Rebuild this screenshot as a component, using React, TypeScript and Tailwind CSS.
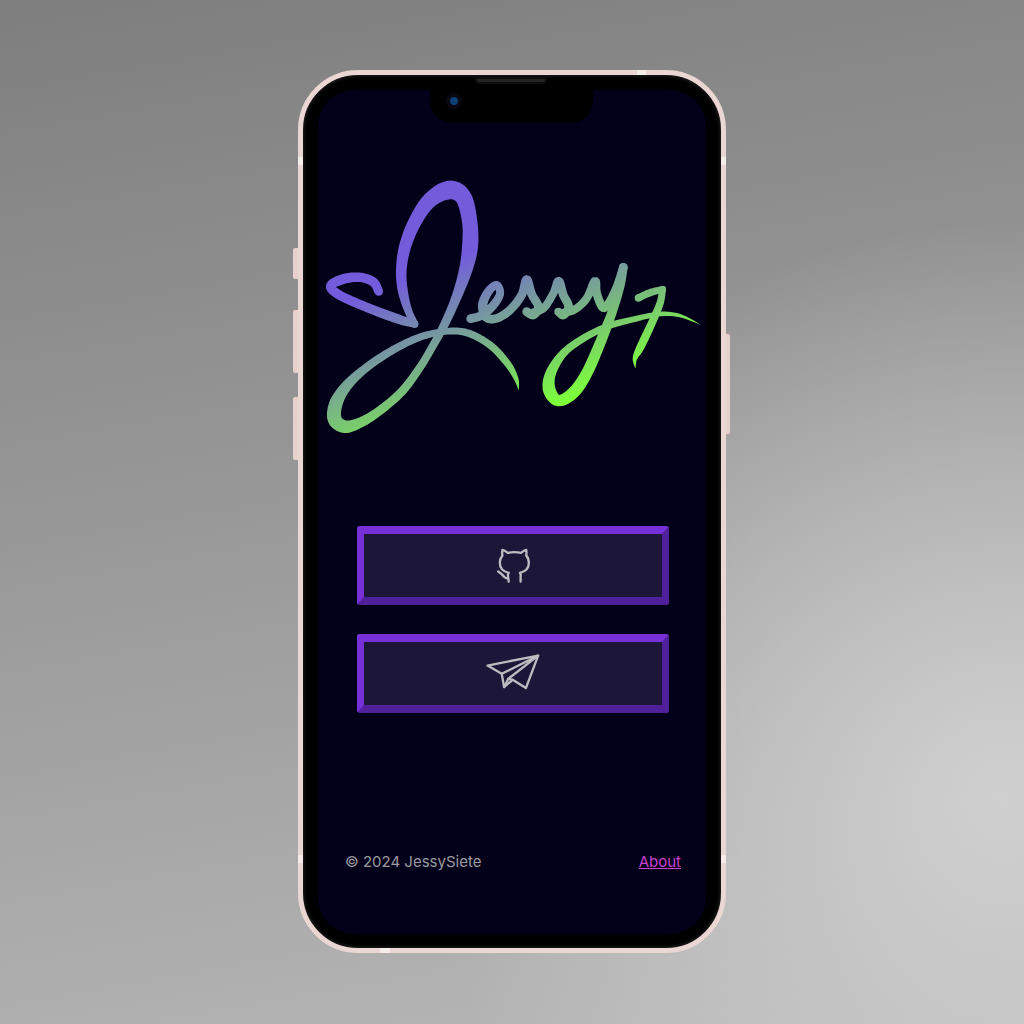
import { Fragment } from 'react';
import type { ReactNode } from 'react';

type Pt = [number, number, number];

// Signature strokes: centre line points with a pen width at each one
const strokes: Pt[][] = [
  // heart
  [[206, 364, 26], [190, 336, 28], [150, 322, 28], [100, 327, 30], [62, 348, 28], [90, 376, 28], [180, 416, 28], [270, 449, 28], [314, 462, 22]],
  // J
  [[314, 462, 22], [294, 420, 24], [278, 360, 30], [274, 300, 32], [285, 230, 36], [315, 155, 40], [360, 90, 46], [418, 60, 56], [460, 82, 50], [479, 155, 46], [480, 230, 48], [467, 300, 40], [440, 380, 30], [405, 460, 26], [370, 525, 24], [330, 592, 24], [275, 665, 26], [205, 725, 27], [150, 758, 31], [105, 770, 38], [74, 748, 42], [78, 700, 40], [108, 650, 32], [160, 600, 26], [235, 548, 24], [320, 505, 22], [400, 485, 20], [470, 488, 22], [540, 525, 22], [592, 580, 21], [618, 625, 14], [626, 660, 1]],
  // essy
  [[482, 446, 26], [515, 436, 26], [548, 408, 26], [570, 372, 24], [560, 345, 24], [535, 365, 26], [518, 405, 28], [528, 442, 26], [560, 445, 26], [600, 420, 26], [635, 375, 26], [650, 328, 26], [665, 372, 26], [685, 410, 26], [670, 435, 26], [650, 425, 26]],
  [[660, 430, 24], [700, 415, 24], [730, 370, 24], [746, 333, 26], [760, 375, 26], [776, 410, 26], [760, 435, 26], [745, 425, 24]],
  [[755, 430, 24], [795, 418, 24], [830, 385, 24], [855, 333, 26], [860, 370, 26], [878, 412, 26], [895, 400, 24], [920, 350, 24], [940, 292, 26]],
  // y tail
  [[940, 292, 26], [930, 350, 26], [905, 430, 28], [870, 520, 32], [830, 610, 34], [790, 668, 36], [745, 692, 34], [718, 660, 38], [722, 610, 32], [760, 550, 24], [820, 505, 22], [890, 470, 20], [970, 448, 18], [1050, 432, 14], [1110, 437, 10], [1170, 463, 1]],
  // 7
  [[985, 384, 22], [1020, 368, 22], [1058, 358, 20]],
  [[1058, 358, 20], [1050, 400, 22], [1025, 460, 24], [992, 530, 24], [975, 565, 14], [976, 594, 1]],
];

function ribbon(pts: Pt[]) {
  const samples: Pt[] = [];
  for (let i = 0; i < pts.length - 1; i++) {
    const p0 = pts[Math.max(i - 1, 0)];
    const p1 = pts[i];
    const p2 = pts[i + 1];
    const p3 = pts[Math.min(i + 2, pts.length - 1)];
    for (let s = 0; s < 12; s++) {
      const t = s / 12;
      const cr = (k: number) =>
        0.5 * (2 * p1[k] + (p2[k] - p0[k]) * t + (2 * p0[k] - 5 * p1[k] + 4 * p2[k] - p3[k]) * t * t + (3 * p1[k] - p0[k] - 3 * p2[k] + p3[k]) * t * t * t);
      samples.push([cr(0), cr(1), cr(2)]);
    }
  }
  samples.push(pts[pts.length - 1]);
  const left: string[] = [];
  const right: string[] = [];
  samples.forEach((p, i) => {
    const a = samples[Math.max(i - 1, 0)];
    const b = samples[Math.min(i + 1, samples.length - 1)];
    const dx = b[0] - a[0];
    const dy = b[1] - a[1];
    const len = Math.hypot(dx, dy) || 1;
    const nx = (-dy / len) * (p[2] / 2);
    const ny = (dx / len) * (p[2] / 2);
    left.push(`${(p[0] + nx).toFixed(1)} ${(p[1] + ny).toFixed(1)}`);
    right.unshift(`${(p[0] - nx).toFixed(1)} ${(p[1] - ny).toFixed(1)}`);
  });
  return `M${left.join('L')}L${right.join('L')}Z`;
}

function Logo() {
  return (
    <svg viewBox="24 0 1164 840" className="block h-[280px] w-[388px] shrink-0">
      <defs>
        <linearGradient id="sig" gradientUnits="userSpaceOnUse" x1="300" y1="320" x2="493" y2="802">
          <stop offset="0" stopColor="#735cdc" />
          <stop offset="1" stopColor="#7cff3a" />
        </linearGradient>
      </defs>
      <g fill="url(#sig)">
        {strokes.map((pts, i) => (
          <Fragment key={i}>
            <path d={ribbon(pts)} />
            <circle cx={pts[0][0]} cy={pts[0][1]} r={pts[0][2] / 2} />
            <circle cx={pts[pts.length - 1][0]} cy={pts[pts.length - 1][1]} r={pts[pts.length - 1][2] / 2} />
          </Fragment>
        ))}
      </g>
    </svg>
  );
}

function GithubIcon() {
  return (
    <svg viewBox="435 78 105 112" className="h-[37px] w-[35px]" fill="none" stroke="#bcbcc0" strokeWidth="7" strokeLinecap="round" strokeLinejoin="round">
      <path d="M473 183l-2-16c-1-5 0-8 2-11-15-3-27-12-27-30 0-12 4-17 8-22-1-5-1-11 0-17 6 1 11 5 16 9 13-3 27-3 40 0 5-4 10-8 16-9 1 6 1 12 0 17 5 5 8 11 8 22 0 18-12 27-27 30 2 3 3 6 2 11v16" />
      <path d="M441 152c7 5 13 9 18 16 3 4 7 5 12 5" />
    </svg>
  );
}

function PlaneIcon() {
  return (
    <svg viewBox="15 22 168 124" className="h-[41px] w-[56px]" fill="none" stroke="#bcbcc0" strokeWidth="7" strokeLinecap="round" strokeLinejoin="round">
      <path d="M22 60L175 30L138 128L98 103L72 125L65 85Z" />
      <path d="M65 85L175 30L85 100L72 125" />
      <path d="M85 100L98 103" />
    </svg>
  );
}

function LinkButton({ children }: { children: ReactNode }) {
  return (
    <button className="flex h-[79px] w-[312px] items-center justify-center rounded-[3px] border-x-[7px] border-y-8 border-t-[#7730d8] border-r-[#50209a] border-b-[#50209a] border-l-[#7730d8] bg-[#1c1738]">
      {children}
    </button>
  );
}

export default function App() {
  return (
    <div className="flex h-screen w-full justify-center bg-[radial-gradient(circle_at_98%_78%,#d0d0d0_0%,rgba(208,208,208,0)_45%),linear-gradient(170deg,#7e7e7e_0%,#b8b8b8_100%)] pt-[70px] font-[Inter,sans-serif]">
      {/* Left side buttons */}
      <div className="flex w-[5px] flex-col pt-[178px]">
        <span className="h-[31px] rounded-l-[2px] bg-[#e8d1cd]" />
        <span className="mt-[31px] h-[63px] rounded-l-[2px] bg-[#e8d1cd]" />
        <span className="mt-[24px] h-[63px] rounded-l-[2px] bg-[#e8d1cd]" />
      </div>

      {/* Phone */}
      <div className="relative h-[883px] w-[428px] rounded-[60px] border-[5px] border-[#ead6d2] bg-black p-[15px] shadow-[inset_0_0_4px_#333]">
        <span className="absolute top-[-5px] left-[334px] h-[5px] w-[9px] bg-[#f6ecea]" />
        <span className="absolute bottom-[-5px] left-[77px] h-[5px] w-[10px] bg-[#f6ecea]" />
        <span className="absolute top-[82px] left-[-5px] h-[8px] w-[5px] bg-[#f6ecea]" />
        <span className="absolute top-[82px] right-[-5px] h-[8px] w-[5px] bg-[#f6ecea]" />
        <span className="absolute bottom-[85px] left-[-5px] h-[8px] w-[5px] bg-[#f6ecea]" />
        <span className="absolute bottom-[85px] right-[-5px] h-[8px] w-[5px] bg-[#f6ecea]" />

        {/* Screen */}
        <div className="relative flex h-[844px] w-[388px] flex-col rounded-[36px] bg-[#03001a] pt-20">
          {/* Notch */}
          <div className="absolute top-0 left-[112px] flex h-[33px] w-[163px] items-start rounded-b-[22px] bg-black pt-[3px] pl-[16px]">
            <span className="flex h-[16px] w-[16px] items-center justify-center rounded-full bg-[#08080f]">
              <span className="h-[8px] w-[8px] rounded-full bg-[#0d3f78]" />
            </span>
          </div>
          <span className="absolute top-[-13px] left-[157px] h-[7px] w-[72px] rounded-b-[4px] border-2 border-[#0d0d0d] bg-[#232323]" />

          <Logo />

          <div className="mt-[76px] ml-[39px] flex flex-col gap-[29px]">
            <LinkButton>
              <GithubIcon />
            </LinkButton>
            <LinkButton>
              <PlaneIcon />
            </LinkButton>
          </div>

          <div className="mt-auto mb-[62px] flex items-center justify-between pr-[25px] pl-[27px] text-[15px] leading-5">
            <span className="text-[#9b9ba0]">© 2024 JessySiete</span>
            <a className="text-[#c93fd0] underline">About</a>
          </div>
        </div>
      </div>

      {/* Right side button */}
      <div className="flex w-[5px] flex-col pt-[264px]">
        <span className="h-[100px] w-[4px] rounded-r-[2px] bg-[#e8d1cd]" />
      </div>
    </div>
  );
}
